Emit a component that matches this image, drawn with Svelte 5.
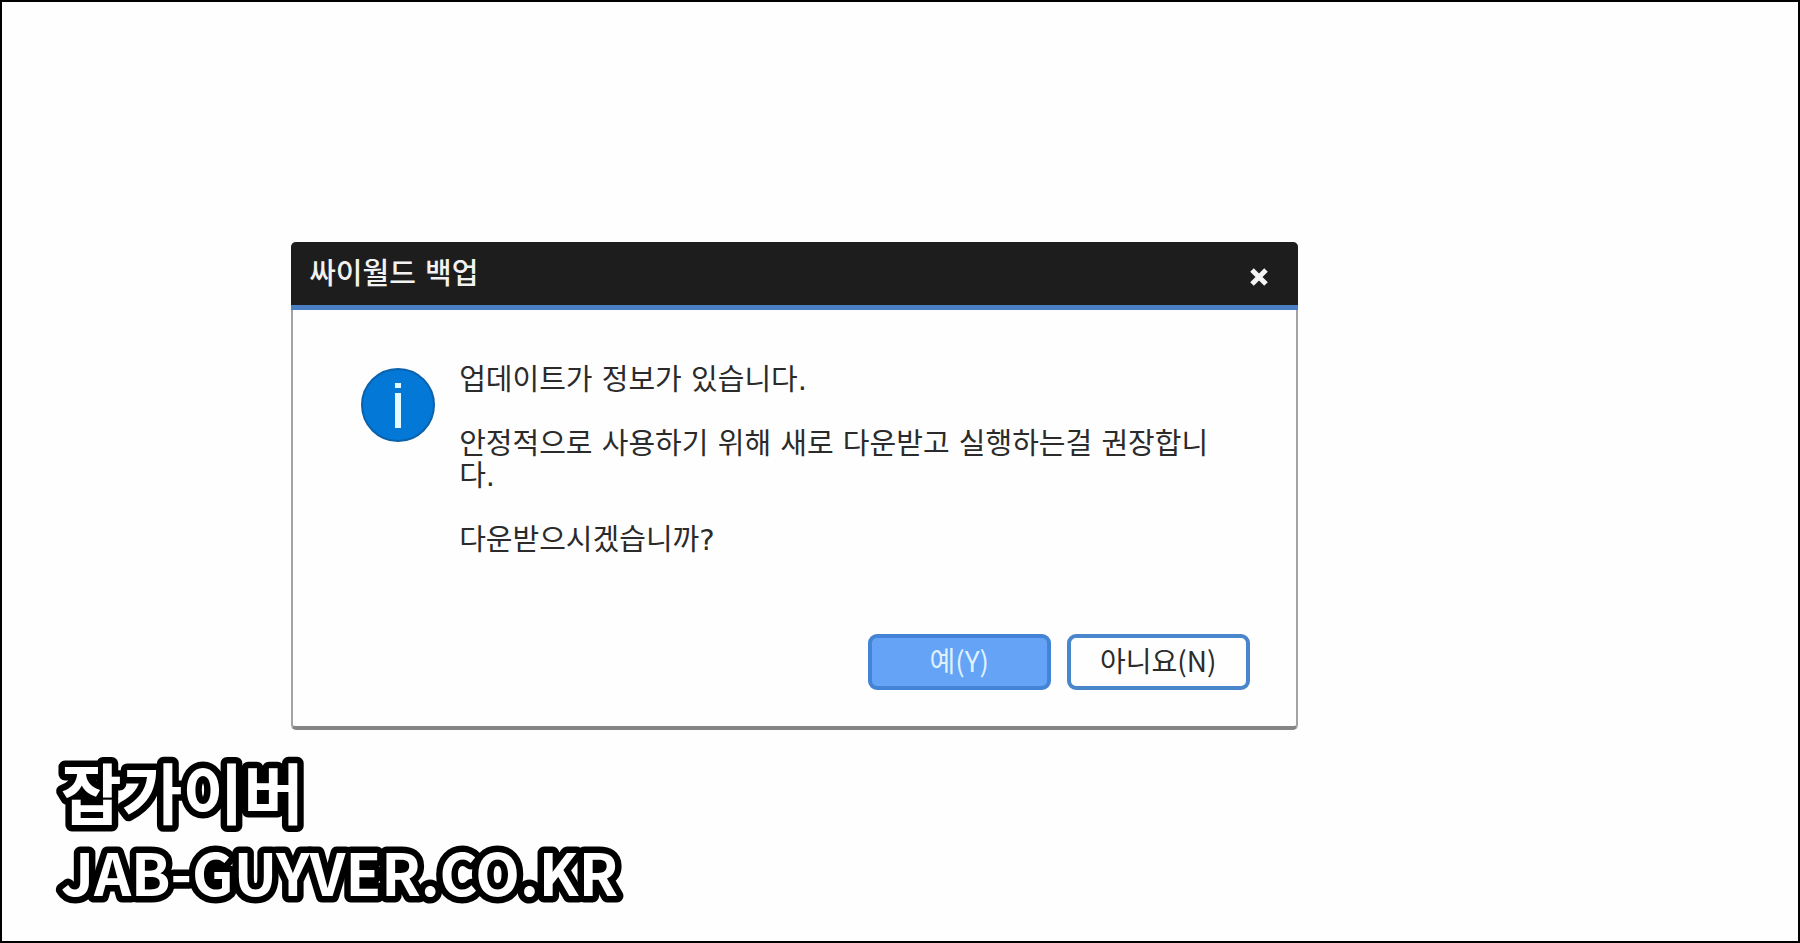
<script lang="ts">
  const title = '싸이월드 백업';
  const paragraphs = [
    '업데이트가 정보가 있습니다.',
    '안정적으로 사용하기 위해 새로 다운받고 실행하는걸 권장합니다.',
    '다운받으시겠습니까?',
  ];

  let open = true;
  const close = () => (open = false);
</script>

<main class="page">
  <div class="stage">
    {#if open}
      <div class="dialog" role="alertdialog" aria-labelledby="dlg-title" aria-describedby="dlg-text">
        <header class="titlebar">
          <h1 id="dlg-title">{title}</h1>
          <button class="close" type="button" aria-label="닫기" on:click={close}>
            <svg viewBox="0 0 18 18" width="18" height="18" aria-hidden="true">
              <path d="M2 2 L16 16 M16 2 L2 16" />
            </svg>
          </button>
        </header>

        <div class="body">
          <svg class="info" viewBox="0 0 74 74" width="74" height="74" aria-hidden="true">
            <circle cx="37" cy="37" r="36" />
            <rect x="34" y="15" width="6" height="5" />
            <rect x="34" y="25" width="6" height="35" />
          </svg>
          <div class="text" id="dlg-text">
            {#each paragraphs as p}
              <p>{p}</p>
            {/each}
          </div>
        </div>

        <footer class="actions">
          <button class="btn primary" type="button" on:click={close}>예(Y)</button>
          <button class="btn" type="button" on:click={close}>아니요(N)</button>
        </footer>
      </div>
    {/if}
  </div>

  <svg class="mark" width="640" height="200">
    <text class="ko" x="9" y="78">잡가이버</text>
    <text class="en" x="9" y="155">JAB-GUYVER.CO.KR</text>
  </svg>
</main>

<style>
  :global(body) { background: #fefefe; }
  .page {
    min-height: 100vh;
    box-sizing: border-box;
    border: 2px solid #000;
    display: flex;
    flex-direction: column;
    justify-content: space-between;
    font-family: "DejaVu Sans", "Noto Sans CJK KR", sans-serif;
    color: #2b2b2b;
  }
  .stage { padding: 240px 0 0 16.1%; }
  .dialog {
    width: 66.8%;
    min-width: 640px;
    box-sizing: border-box;
    border: 2px solid #a3a3a3;
    border-top: 0;
    border-bottom: 4px solid #858585;
    border-radius: 5px;
    background: #fefefe;
  }
  .titlebar {
    display: flex;
    align-items: center;
    justify-content: space-between;
    height: 63px;
    margin: 0 -2px;
    padding: 0 30px 0 18px;
    background: #1d1d1d;
    border-bottom: 5px solid #4a7fc4;
    border-radius: 5px 5px 0 0;
  }
  h1 { margin: 0; font-size: 29px; line-height: 32px; font-weight: 500; color: #f2f2f2; }
  .close { display: flex; padding: 6px 0 0; border: 0; background: none; cursor: pointer; }
  .close path { stroke: #f4f4f4; stroke-width: 5; fill: none; }
  .body { display: flex; gap: 24px; padding: 54px 68px 0; }
  .info { flex: none; margin-top: 4px; }
  .info circle { fill: #0378d7; stroke: #0a62ad; stroke-width: 2; }
  .info rect { fill: #e6fbff; }
  .text { flex: 1; word-break: break-all; }
  p { margin: 0 0 32px; font-size: 29px; line-height: 32px; }
  .actions { display: flex; justify-content: flex-end; gap: 16px; padding: 46px 46px 36px; }
  .btn {
    width: 183px;
    height: 56px;
    padding: 0 0 4px;
    border: 4px solid #4a86cc;
    border-radius: 9px;
    background: #fefefe;
    color: #2b2b2b;
    font: 28px/32px "Noto Sans CJK KR", sans-serif;
    cursor: pointer;
  }
  .btn.primary { background: #64a3f5; border-color: #4484d6; color: #dff1ff; }
  .mark { display: block; max-width: 100%; margin-left: 50px; overflow: visible; }
  .mark text {
    fill: #fff;
    stroke: #000;
    stroke-width: 13px;
    stroke-linejoin: round;
    paint-order: stroke;
  }
  .ko { font: 700 66px "Noto Sans CJK KR", sans-serif; }
  .en { font: 700 58px "Noto Sans CJK KR", sans-serif; }
</style>
